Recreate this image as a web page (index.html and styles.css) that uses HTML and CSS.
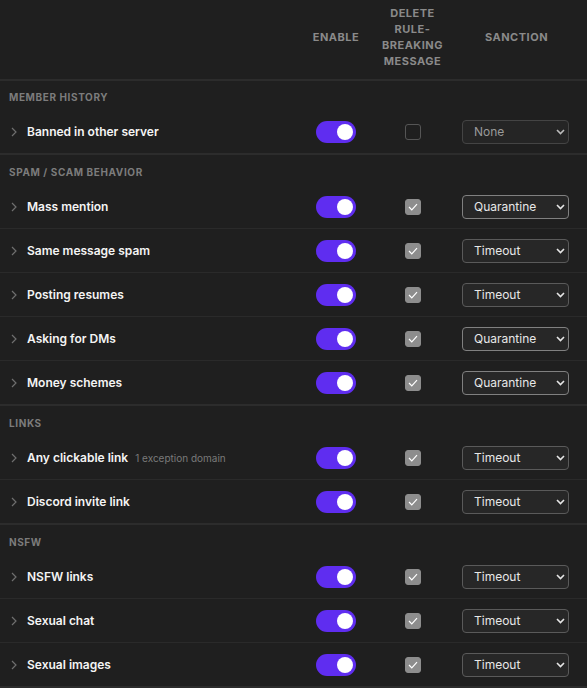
FILE: index.html
```html
<!DOCTYPE html>
<html>
<head>
<meta charset="utf-8">
<link rel="stylesheet" href="styles.css">
</head>
<body>
<div class="table">
  <div class="head">
    <div></div>
    <div class="hcell">ENABLE</div>
    <div class="hcell"><span class="hwrap">DELETE RULE-BREAKING MESSAGE</span></div>
    <div class="hcell sanction">SANCTION</div>
  </div>

  <section class="group">
    <div class="glabel">MEMBER HISTORY</div>
    <div class="row">
      <div class="label"><svg class="chev" width="6" height="10" viewBox="0 0 6 10"><path d="M1 1l4 4-4 4" fill="none" stroke="#6f6f6f" stroke-width="1.2"/></svg><span class="name">Banned in other server</span></div>
      <div class="cell"><span class="toggle"><span class="knob"></span></span></div>
      <div class="cell"><span class="box"></span></div>
      <div class="cell end"><span class="sel dim">None<svg class="caret" width="9" height="6" viewBox="0 0 9 6"><path d="M1 1l3.5 3.5L8 1" fill="none" stroke="#bbb" stroke-width="1.6"/></svg></span></div>
    </div>
  </section>

  <section class="group">
    <div class="glabel">SPAM / SCAM BEHAVIOR</div>
    <div class="row">
      <div class="label"><svg class="chev" width="6" height="10" viewBox="0 0 6 10"><path d="M1 1l4 4-4 4" fill="none" stroke="#6f6f6f" stroke-width="1.2"/></svg><span class="name">Mass mention</span></div>
      <div class="cell"><span class="toggle"><span class="knob"></span></span></div>
      <div class="cell"><span class="box on"><svg width="10" height="8" viewBox="0 0 10 8"><path d="M1 4l2.8 2.8L9 1.2" fill="none" stroke="#fff" stroke-width="1.2"/></svg></span></div>
      <div class="cell end"><span class="sel hi">Quarantine<svg class="caret" width="9" height="6" viewBox="0 0 9 6"><path d="M1 1l3.5 3.5L8 1" fill="none" stroke="#e6e6e6" stroke-width="1.6"/></svg></span></div>
    </div>
    <div class="row">
      <div class="label"><svg class="chev" width="6" height="10" viewBox="0 0 6 10"><path d="M1 1l4 4-4 4" fill="none" stroke="#6f6f6f" stroke-width="1.2"/></svg><span class="name">Same message spam</span></div>
      <div class="cell"><span class="toggle"><span class="knob"></span></span></div>
      <div class="cell"><span class="box on"><svg width="10" height="8" viewBox="0 0 10 8"><path d="M1 4l2.8 2.8L9 1.2" fill="none" stroke="#fff" stroke-width="1.2"/></svg></span></div>
      <div class="cell end"><span class="sel">Timeout<svg class="caret" width="9" height="6" viewBox="0 0 9 6"><path d="M1 1l3.5 3.5L8 1" fill="none" stroke="#e6e6e6" stroke-width="1.6"/></svg></span></div>
    </div>
    <div class="row">
      <div class="label"><svg class="chev" width="6" height="10" viewBox="0 0 6 10"><path d="M1 1l4 4-4 4" fill="none" stroke="#6f6f6f" stroke-width="1.2"/></svg><span class="name">Posting resumes</span></div>
      <div class="cell"><span class="toggle"><span class="knob"></span></span></div>
      <div class="cell"><span class="box on"><svg width="10" height="8" viewBox="0 0 10 8"><path d="M1 4l2.8 2.8L9 1.2" fill="none" stroke="#fff" stroke-width="1.2"/></svg></span></div>
      <div class="cell end"><span class="sel">Timeout<svg class="caret" width="9" height="6" viewBox="0 0 9 6"><path d="M1 1l3.5 3.5L8 1" fill="none" stroke="#e6e6e6" stroke-width="1.6"/></svg></span></div>
    </div>
    <div class="row">
      <div class="label"><svg class="chev" width="6" height="10" viewBox="0 0 6 10"><path d="M1 1l4 4-4 4" fill="none" stroke="#6f6f6f" stroke-width="1.2"/></svg><span class="name">Asking for DMs</span></div>
      <div class="cell"><span class="toggle"><span class="knob"></span></span></div>
      <div class="cell"><span class="box on"><svg width="10" height="8" viewBox="0 0 10 8"><path d="M1 4l2.8 2.8L9 1.2" fill="none" stroke="#fff" stroke-width="1.2"/></svg></span></div>
      <div class="cell end"><span class="sel hi">Quarantine<svg class="caret" width="9" height="6" viewBox="0 0 9 6"><path d="M1 1l3.5 3.5L8 1" fill="none" stroke="#e6e6e6" stroke-width="1.6"/></svg></span></div>
    </div>
    <div class="row">
      <div class="label"><svg class="chev" width="6" height="10" viewBox="0 0 6 10"><path d="M1 1l4 4-4 4" fill="none" stroke="#6f6f6f" stroke-width="1.2"/></svg><span class="name">Money schemes</span></div>
      <div class="cell"><span class="toggle"><span class="knob"></span></span></div>
      <div class="cell"><span class="box on"><svg width="10" height="8" viewBox="0 0 10 8"><path d="M1 4l2.8 2.8L9 1.2" fill="none" stroke="#fff" stroke-width="1.2"/></svg></span></div>
      <div class="cell end"><span class="sel hi">Quarantine<svg class="caret" width="9" height="6" viewBox="0 0 9 6"><path d="M1 1l3.5 3.5L8 1" fill="none" stroke="#e6e6e6" stroke-width="1.6"/></svg></span></div>
    </div>
  </section>

  <section class="group">
    <div class="glabel">LINKS</div>
    <div class="row">
      <div class="label"><svg class="chev" width="6" height="10" viewBox="0 0 6 10"><path d="M1 1l4 4-4 4" fill="none" stroke="#6f6f6f" stroke-width="1.2"/></svg><span class="name">Any clickable link</span><span class="note">1 exception domain</span></div>
      <div class="cell"><span class="toggle"><span class="knob"></span></span></div>
      <div class="cell"><span class="box on"><svg width="10" height="8" viewBox="0 0 10 8"><path d="M1 4l2.8 2.8L9 1.2" fill="none" stroke="#fff" stroke-width="1.2"/></svg></span></div>
      <div class="cell end"><span class="sel">Timeout<svg class="caret" width="9" height="6" viewBox="0 0 9 6"><path d="M1 1l3.5 3.5L8 1" fill="none" stroke="#e6e6e6" stroke-width="1.6"/></svg></span></div>
    </div>
    <div class="row">
      <div class="label"><svg class="chev" width="6" height="10" viewBox="0 0 6 10"><path d="M1 1l4 4-4 4" fill="none" stroke="#6f6f6f" stroke-width="1.2"/></svg><span class="name">Discord invite link</span></div>
      <div class="cell"><span class="toggle"><span class="knob"></span></span></div>
      <div class="cell"><span class="box on"><svg width="10" height="8" viewBox="0 0 10 8"><path d="M1 4l2.8 2.8L9 1.2" fill="none" stroke="#fff" stroke-width="1.2"/></svg></span></div>
      <div class="cell end"><span class="sel">Timeout<svg class="caret" width="9" height="6" viewBox="0 0 9 6"><path d="M1 1l3.5 3.5L8 1" fill="none" stroke="#e6e6e6" stroke-width="1.6"/></svg></span></div>
    </div>
  </section>

  <section class="group">
    <div class="glabel">NSFW</div>
    <div class="row">
      <div class="label"><svg class="chev" width="6" height="10" viewBox="0 0 6 10"><path d="M1 1l4 4-4 4" fill="none" stroke="#6f6f6f" stroke-width="1.2"/></svg><span class="name">NSFW links</span></div>
      <div class="cell"><span class="toggle"><span class="knob"></span></span></div>
      <div class="cell"><span class="box on"><svg width="10" height="8" viewBox="0 0 10 8"><path d="M1 4l2.8 2.8L9 1.2" fill="none" stroke="#fff" stroke-width="1.2"/></svg></span></div>
      <div class="cell end"><span class="sel">Timeout<svg class="caret" width="9" height="6" viewBox="0 0 9 6"><path d="M1 1l3.5 3.5L8 1" fill="none" stroke="#e6e6e6" stroke-width="1.6"/></svg></span></div>
    </div>
    <div class="row">
      <div class="label"><svg class="chev" width="6" height="10" viewBox="0 0 6 10"><path d="M1 1l4 4-4 4" fill="none" stroke="#6f6f6f" stroke-width="1.2"/></svg><span class="name">Sexual chat</span></div>
      <div class="cell"><span class="toggle"><span class="knob"></span></span></div>
      <div class="cell"><span class="box on"><svg width="10" height="8" viewBox="0 0 10 8"><path d="M1 4l2.8 2.8L9 1.2" fill="none" stroke="#fff" stroke-width="1.2"/></svg></span></div>
      <div class="cell end"><span class="sel">Timeout<svg class="caret" width="9" height="6" viewBox="0 0 9 6"><path d="M1 1l3.5 3.5L8 1" fill="none" stroke="#e6e6e6" stroke-width="1.6"/></svg></span></div>
    </div>
    <div class="row">
      <div class="label"><svg class="chev" width="6" height="10" viewBox="0 0 6 10"><path d="M1 1l4 4-4 4" fill="none" stroke="#6f6f6f" stroke-width="1.2"/></svg><span class="name">Sexual images</span></div>
      <div class="cell"><span class="toggle"><span class="knob"></span></span></div>
      <div class="cell"><span class="box on"><svg width="10" height="8" viewBox="0 0 10 8"><path d="M1 4l2.8 2.8L9 1.2" fill="none" stroke="#fff" stroke-width="1.2"/></svg></span></div>
      <div class="cell end"><span class="sel">Timeout<svg class="caret" width="9" height="6" viewBox="0 0 9 6"><path d="M1 1l3.5 3.5L8 1" fill="none" stroke="#e6e6e6" stroke-width="1.6"/></svg></span></div>
    </div>
  </section>
</div>
</body>
</html>
```

FILE: styles.css
```css
html, body {
  margin: 0;
  padding: 0;
  background: #1f1f1f;
}
body {
  font-family: Inter, "Noto Sans", "Liberation Sans", sans-serif;
  color: #f0f0f0;
  -webkit-font-smoothing: antialiased;
}
.table {
  width: 587px;
}
.head,
.row {
  display: grid;
  grid-template-columns: 1fr 80px 73px 120px;
  padding-right: 18px;
}
.head {
  border-bottom: 2px solid #2c2c2c;
  align-items: center;
  padding-bottom: 5px;
  box-sizing: border-box;
  height: 81px;
}
.hcell {
  font-size: 11px;
  font-weight: 700;
  color: #8a8a8a;
  letter-spacing: 0.5px;
  line-height: 16px;
  text-align: center;
  display: flex;
  justify-content: center;
}
.hwrap {
  display: block;
  width: 66px;
}
.hcell.sanction {
  padding-left: 15px;
}
.group {
  border-bottom: 2px solid #2c2c2c;
}
.glabel {
  padding: 10px 0 6px 9px;
  font-size: 10px;
  line-height: 13px;
  font-weight: 700;
  letter-spacing: 0.6px;
  color: #7c7c7c;
}
.group + .group .glabel {
  padding-top: 11px;
}
.row {
  height: 43px;
  align-items: center;
  border-bottom: 1px solid #2a2a2a;
}
.row:last-child {
  border-bottom: none;
}
.label {
  display: flex;
  align-items: center;
  padding-left: 11px;
}
.chev {
  flex: none;
  margin-right: 10px;
}
.name {
  font-size: 12px;
  font-weight: 600;
  color: #f4f4f4;
}
.note {
  font-size: 10px;
  color: #7a7a7a;
  margin-left: 7px;
}
.cell {
  display: flex;
  justify-content: center;
  align-items: center;
}
.cell.end {
  justify-content: flex-end;
}
.toggle {
  width: 40px;
  height: 22px;
  border-radius: 11px;
  background: #5f2df0;
  display: flex;
  align-items: center;
  justify-content: flex-end;
  padding-right: 3px;
  box-sizing: border-box;
}
.knob {
  width: 16px;
  height: 16px;
  border-radius: 50%;
  background: #ffffff;
}
.box {
  width: 16px;
  height: 16px;
  border-radius: 3px;
  box-sizing: border-box;
  border: 1px solid #555555;
  display: flex;
  align-items: center;
  justify-content: center;
}
.box.on {
  background: #8d8d8d;
  border-color: #8d8d8d;
}
.sel {
  width: 107px;
  height: 24px;
  box-sizing: border-box;
  border: 1px solid #5a5a5a;
  border-radius: 4px;
  background: #272727;
  display: flex;
  align-items: center;
  justify-content: space-between;
  padding: 0 3px 0 11px;
  font-size: 12px;
  color: #e8e8e8;
}
.sel.hi {
  border-color: #808080;
}
.sel.dim {
  border-color: #444444;
  color: #9a9a9a;
  background: #252525;
}
.caret {
  flex: none;
}
```
